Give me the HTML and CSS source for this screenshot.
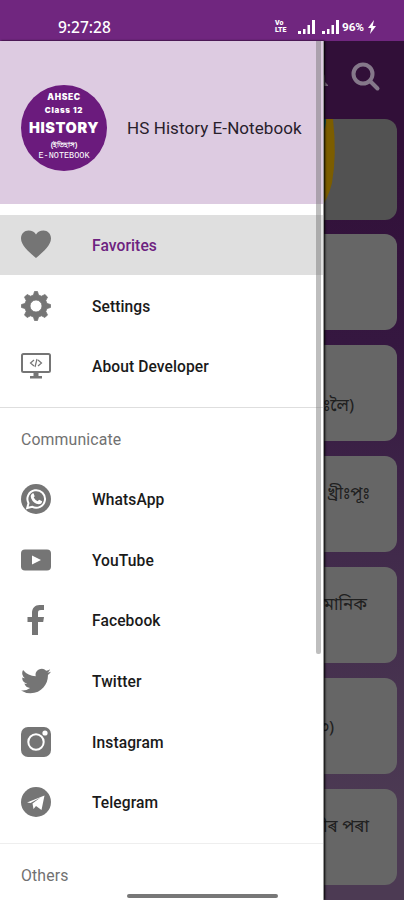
FILE: index.html
```html
<!DOCTYPE html>
<html lang="en">
<head>
<meta charset="utf-8">
<title>HS History E-Notebook</title>
<link rel="stylesheet" href="styles.css">
</head>
<body>
<div class="screen">
  <header class="status">
    <span class="clock">9:27:28</span>
    <span class="indicators">
      <span class="volte"><b>Vo</b><b>LTE</b></span>
      <svg class="signal" viewBox="0 0 18 14"><path d="M0 11h3v3H0zM5 9h2.500v5H5zM9.500 5h2.500v9H9.500zM14 0h3v14h-3z"/></svg>
      <svg class="signal second" viewBox="0 0 18 14"><path d="M0 11h3v3H0zM5 9h2.500v5H5zM9.500 5h2.500v9H9.500zM14 0h3v14h-3z"/></svg>
      <span class="battery">96%</span>
      <svg class="bolt" viewBox="0 0 8 14"><path d="M6 0 0 8h3.300L2 14l6-8H4.700z"/></svg>
    </span>
  </header>
  <main class="content">
    <div class="toolbar">
      <svg class="bell" viewBox="0 0 18 20"><path d="M3 16V9q0-6 5-6.500Q14 3 14 9v4l3 3v1H1z"/></svg>
      <svg class="search" viewBox="0 0 30 30"><circle cx="12" cy="12" r="9.500"/><path d="m19 19 7.500 7.500"/></svg>
    </div>
    <div class="cards" lang="as">
      <article class="card first"><svg class="art" viewBox="0 0 60 101"><path class="gold" d="M40 0h13Q57 35 52 64 48 80 40 90z"/><path class="teal" d="M40 0h6q0 8-3 14h-3z"/></svg></article>
      <article class="card"></article>
      <article class="card"><p class="t1">ঃলৈ)</p></article>
      <article class="card"><p class="t2">খ্ৰীঃপূঃ</p></article>
      <article class="card"><p class="t3">সামানিক</p></article>
      <article class="card"><p class="t4">৩)</p></article>
      <article class="card"><p class="t5">ীৰ পৰা</p></article>
    </div>
  </main>
  <nav class="drawer">
    <div class="profile">
      <div class="logo">
        <span class="l1">AHSEC</span><span class="l2">Class 12</span><span class="l3">HISTORY</span><span class="l4">(ইতিহাস)</span><span class="l5">E-NOTEBOOK</span>
      </div>
      <span class="title">HS History E-Notebook</span>
    </div>
    <ul class="menu">
      <li class="item active"><svg viewBox="0 0 30 30"><path d="M15 28C10 23.500 0 16 0 8.500 0 3.500 3.500.5 7.500.5c3.500 0 6 1.500 7.500 4 1.500-2.500 4-4 7.500-4 4 0 7.500 3 7.500 8C30 16 20 23.500 15 28z"/></svg><span>Favorites</span></li>
      <li class="item"><svg class="gear" viewBox="0 0 30 30"><path fill-rule="evenodd" d="M12.500 4 13.500.5h3l1 3.500 3 1.200 3.400-1.700 2.600 2.600-1.700 3.400 1.200 3 3.500 1v3l-3.500 1-1.200 3 1.700 3.400-2.600 2.600-3.400-1.700-3 1.200-1 3.500h-3l-1-3.500-3-1.200-3.400 1.700-2.600-2.600 1.700-3.400-1.200-3-3.500-1v-3l3.500-1 1.200-3-1.700-3.400 2.600-2.600 3.400 1.700zM15 9a6 6 0 1 0 0 12 6 6 0 0 0 0-12z"/></svg><span>Settings</span></li>
      <li class="item"><svg viewBox="0 0 30 30"><path class="line" d="M2.500 3h25q1.500 0 1.500 1.500v15q0 1.500-1.500 1.500h-25Q1 21 1 19.500v-15Q1 3 2.500 3z"/><path d="M12.500 21h5v4h3.500v2.500H9V25h3.500z"/><path class="thin" d="m13 9-3.500 3 3.500 3M17 9l3.500 3-3.500 3M16 8l-2 8"/></svg><span>About Developer</span></li>
    </ul>
    <section class="group">
      <h2>Communicate</h2>
      <ul>
        <li class="item"><svg viewBox="0 0 30 30"><circle cx="15" cy="15" r="15"/><path class="white-line" d="m6.200 24 1.300-4.800a8.800 8.800 0 1 1 3.500 3.500z"/><path class="white" d="M10.500 10.200q1-1.200 2-.9l1.200 3-1 1.300q1.500 2.800 4 3.700l1.400-1.500 3 1.500q-.2 3-3.300 3-5.400-.4-7.700-6-1-2.500.4-4.100z"/></svg><span>WhatsApp</span></li>
        <li class="item"><svg viewBox="0 0 30 30"><rect y="4.500" width="30" height="21" rx="4"/><path class="white" d="m11 10.500 9 4.500-9 4.500z"/></svg><span>YouTube</span></li>
        <li class="item"><svg viewBox="0 0 30 30"><path d="M11 30V17H6.500v-5H11V8c0-5 3-8 7.500-8H23v5h-3c-2.500 0-3 1.200-3 3v4h6l-.8 5H17v13z"/></svg><span>Facebook</span></li>
        <li class="item"><svg viewBox="0 0 24 24"><path d="M23.950 4.570a10 10 0 0 1-2.820.770 4.960 4.960 0 0 0 2.160-2.720 9.900 9.900 0 0 1-3.120 1.190 4.920 4.920 0 0 0-8.380 4.480A13.930 13.930 0 0 1 1.640 3.160a4.920 4.920 0 0 0 1.520 6.570 4.900 4.900 0 0 1-2.230-.610v.060a4.920 4.920 0 0 0 3.950 4.830 5 5 0 0 1-2.210.080 4.940 4.940 0 0 0 4.600 3.420A9.870 9.870 0 0 1 0 19.540a13.990 13.990 0 0 0 7.550 2.210c9.050 0 14-7.500 14-13.980 0-.210 0-.420-.020-.630a9.940 9.940 0 0 0 2.460-2.550z"/></svg><span>Twitter</span></li>
        <li class="item"><svg viewBox="0 0 30 30"><rect width="30" height="30" rx="7"/><circle class="white-line" cx="15" cy="15" r="7.700"/><circle class="white" cx="24" cy="6" r="2.600"/></svg><span>Instagram</span></li>
        <li class="item"><svg viewBox="0 0 30 30"><circle cx="15" cy="15" r="15"/><path class="white" d="m6 15.500 17.500-7-3 14.500-5.500-4-2.500 3-1-5.500 8-6-10 5.500z"/></svg><span>Telegram</span></li>
      </ul>
    </section>
    <section class="group others"><h2>Others</h2></section>
    <div class="scrollbar"></div>
  </nav>
  <div class="home-bar"></div>
</div>
</body>
</html>
```
FILE: styles.css
```css
* { box-sizing: border-box; }
body { margin: 0; font-family: Roboto, "Liberation Sans", sans-serif; }
ul, h2, p { margin: 0; padding: 0; list-style: none; }
.screen { position: relative; width: 404px; height: 900px; overflow: hidden; display: flex; flex-direction: column; }
.status { height: 41px; flex: none; background: #70267f; color: #fff; display: flex; justify-content: space-between; padding: 14px 28px 0 58px; }
.clock { font: 500 15.500px/27px "Noto Sans", sans-serif; }
.indicators { display: flex; align-items: center; height: 26px; }
.volte { display: flex; flex-direction: column; width: 17px; font-size: 7px; line-height: 7px; margin-right: 6px; }
.volte b { font-weight: 900; }
.signal { width: 18px; height: 14px; fill: #fff; }
.second { margin-left: 6px; }
.battery { font-size: 11.800px; font-weight: 700; margin-left: 2px; width: 24px; letter-spacing: -.1px; }
.bolt { width: 8px; height: 14px; fill: #fff; margin-left: 2px; }
.content { flex: 1; background: linear-gradient(#310f38 0, #310f38 12%, #351740 35%, #412a4b 60%, #4c3a53 90%); }
.toolbar { height: 78px; display: flex; justify-content: flex-end; align-items: flex-start; padding: 21px 23px 0 0; gap: 22px; }
.bell { width: 18px; height: 20px; margin-top: 7px; fill: #756378; }
.search { width: 30px; height: 30px; fill: none; stroke: #85788a; stroke-width: 4; stroke-linecap: round; }
.cards { display: flex; flex-direction: column; gap: 15px; padding: 0 7px; }
.card { height: 96px; flex: none; border-radius: 12px; background: #666; overflow: hidden; color: #202020; font: 17px/30px "Noto Sans Bengali", "Noto Serif Bengali", "Lohit Bengali", FreeSerif, sans-serif; text-align: right; }
.first { height: 101px; background: #525252; display: flex; margin-bottom: -1px; }
.art { width: 60px; height: 101px; margin-left: 273px; }
.teal { fill: #0c5a5c; }
.gold { fill: #7c5d00; }
.card p { white-space: nowrap; }
.t1 { padding: 47px 43px 0 0; }
.t2 { padding: 24px 27px 0 0; }
.t3 { padding: 24px 30px 0 0; }
.t4 { padding: 36px 63px 0 0; }
.t5 { padding: 24px 28px 0 0; }
.drawer { position: absolute; left: 0; top: 41px; width: 324px; height: 859px; background: #fff; border-right: 1px solid #999; box-shadow: 1px 0 2px #000; overflow: hidden; }
.profile { height: 163px; background: #ddcbe1; display: flex; align-items: center; padding: 10px 0 0 21px; gap: 20px; }
.logo { width: 86px; height: 86px; border-radius: 50%; background: #6b1b7d; color: #fff; display: flex; flex-direction: column; align-items: center; padding-top: 6px; white-space: nowrap; font-family: "Liberation Sans", sans-serif; font-weight: 700; }
.l1 { font: 900 8.500px/13px Inter, sans-serif; letter-spacing: .6px; }
.l2 { font: 900 8px/13px Inter, sans-serif; letter-spacing: .7px; }
.l3 { font: 900 14.500px/21px Inter, sans-serif; letter-spacing: .6px; }
.l4 { font-size: 7px; line-height: 13px; }
.l5 { font: 8.500px/11px "Liberation Mono", monospace; }
.title { font-size: 17px; letter-spacing: .08px; color: #28202b; white-space: nowrap; padding-top: 1px; }
.menu { padding: 10.500px 0 10px; }
.item { display: flex; align-items: center; height: 60.700px; padding-left: 21px; gap: 41px; font-size: 15.600px; font-weight: 500; color: #1a1a1a; letter-spacing: .09px; }
.item svg { width: 30px; height: 30px; fill: #757575; flex: none; }
.item .gear { stroke: #757575; stroke-width: .8; stroke-linejoin: round; }
.item span { padding-top: 2px; }
.item.active { background: #dfdfdf; color: #6d2280; }
.item .line { fill: none; stroke: #757575; stroke-width: 2; }
.item .thin { fill: none; stroke: #757575; stroke-width: 1.200; }
.item .white { fill: #fff; }
.item .white-line { fill: none; stroke: #fff; stroke-width: 2; }
.group { border-top: 1px solid #dedede; padding-bottom: 10px; }
.group.others { border-color: #eee; }
.group h2 { height: 61px; line-height: 64px; padding-left: 21px; font-size: 15.800px; font-weight: 400; color: #717171; letter-spacing: .15px; }
.scrollbar { position: absolute; top: 0; right: 2px; width: 5px; height: 613px; border-radius: 0 0 2px 2px; background: rgba(110, 110, 110, .45); }
.home-bar { position: absolute; left: 127px; top: 894px; width: 151px; height: 4px; border-radius: 2px; background: #777; }
```
